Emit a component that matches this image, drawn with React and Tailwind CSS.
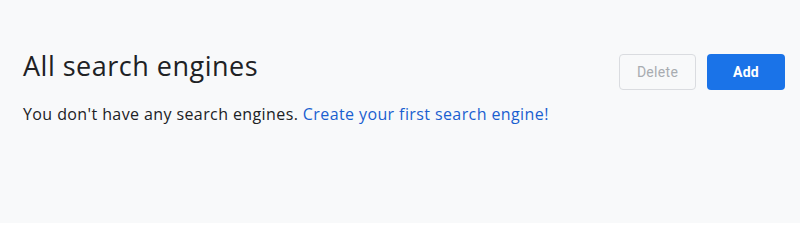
export default function App() {
  return (
    <div
      className="h-[223px] w-[800px] bg-[#f8f9fa] pl-[23px] pr-[15px] pt-[54px]"
      style={{ fontFamily: "'Open Sans', Roboto, sans-serif" }}
    >
      <div className="flex items-start justify-between">
        <h1 className="mt-[-6px] text-[27px] leading-[36px] font-normal tracking-[0.5px] text-[#202124]">
          All search engines
        </h1>
        <div className="flex gap-[11px]" style={{ fontFamily: "Roboto, sans-serif" }}>
          <button
            disabled
            className="h-[36px] w-[77px] rounded-[4px] border border-[#dadce0] bg-transparent text-[14px] font-normal tracking-[0.3px] text-[#a8acb1]"
          >
            Delete
          </button>
          <button className="h-[36px] w-[78px] rounded-[4px] bg-[#1a73e8] text-[14px] font-bold tracking-[0.3px] text-white">
            Add
          </button>
        </div>
      </div>
      <p className="mt-[12px] text-[16px] leading-[24px] tracking-[0.4px] text-[#202124]">
        You don't have any search engines.{" "}
        <a href="#" className="text-[#1a5fd0]">
          Create your first search engine!
        </a>
      </p>
    </div>
  );
}
